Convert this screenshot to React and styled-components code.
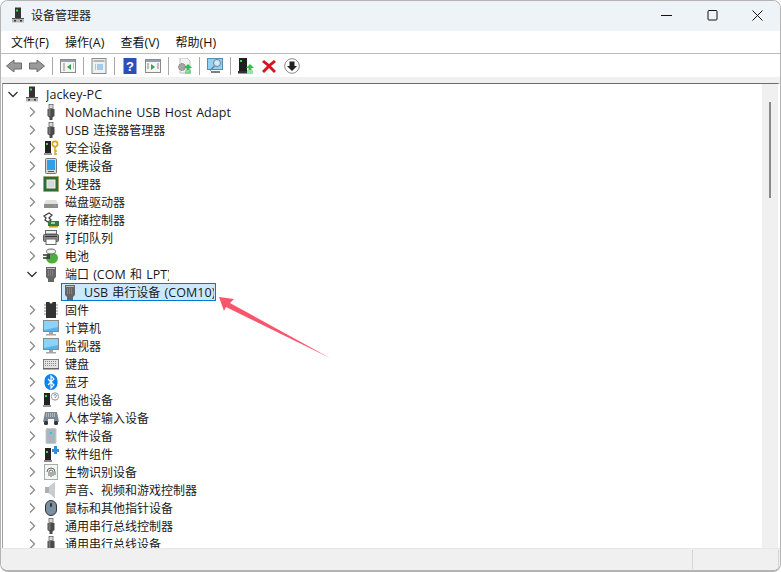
import React from "react";
import styled, { createGlobalStyle } from "styled-components";

const Tower = ({ led = "#35e04a", fill = "#333" }) => (
  <>
    <rect x="5" y="0.500" width="6" height="10.500" fill={fill} />
    <rect x="6" y="2.500" width="2" height="2" fill={led} />
    <path d="M2 12h12v3.500H2z" fill="#b8b8b8" />
    <rect x="2" y="11" width="12" height="1" fill="#555" />
    <rect x="4" y="13" width="2" height="1.500" fill="#333" />
    <rect x="10" y="13" width="2" height="1.500" fill="#333" />
  </>
);

const icons = {
  pc: <Tower />,
  usb: (
    <>
      <rect x="6" y="0.500" width="4" height="4" fill="#d9d9d9" stroke="#666" strokeWidth=".8" />
      <path d="M4.500 5h7v7l-2 1.500V16h-3v-2.500l-2-1.500z" fill="#4a4a4a" />
      <rect x="5.500" y="5" width="2" height="7" fill="#777" />
    </>
  ),
  security: (
    <>
      <rect x="2" y="1" width="6" height="12" fill="#222" />
      <rect x="3" y="3" width="2" height="2" fill="#35e04a" />
      <rect x="1" y="13" width="8" height="2" fill="#999" />
      <circle cx="12" cy="4" r="2.600" fill="none" stroke="#d9a520" strokeWidth="1.600" />
      <path d="M12 7v8M12 11h2M12 14h2" stroke="#d9a520" strokeWidth="1.400" />
    </>
  ),
  portable: (
    <>
      <rect x="2.500" y="0.500" width="11" height="15" rx="1" fill="#d5d5d5" stroke="#777" />
      <rect x="4" y="2" width="8" height="10" fill="#2f9fe8" />
      <rect x="5" y="13" width="6" height="1" fill="#555" />
    </>
  ),
  cpu: (
    <>
      <rect x="0.500" y="0.500" width="15" height="15" fill="#2f6b3a" stroke="#b59a3a" strokeDasharray="1 1" />
      <rect x="2" y="2" width="12" height="12" fill="#2f6b3a" />
      <rect x="4" y="4" width="8" height="8" fill="#d8d8d8" stroke="#eee" />
    </>
  ),
  disk: (
    <>
      <path d="M3 6h10l2 3.500V14H1V9.500z" fill="#e0e0e0" />
      <path d="M1 10h14v4H1z" fill="#8c8c8c" />
      <rect x="11" y="11" width="2" height="1" fill="#35e04a" />
    </>
  ),
  storage: (
    <>
      <path d="M1 4l5-3 3 2-3 3 2 2-3 2-3-2 1-2z" fill="none" stroke="#444" strokeWidth="1.300" />
      <rect x="5" y="9" width="11" height="5" fill="#2f7d46" />
      <rect x="6" y="14" width="9" height="1.500" fill="#c9a227" />
      <rect x="8" y="10" width="4" height="2" fill="#9ad3a5" />
    </>
  ),
  printer: (
    <>
      <rect x="2.500" y="0.500" width="11" height="3.500" fill="#eee" stroke="#666" />
      <rect x="0.500" y="4.500" width="15" height="7" rx="1" fill="#8b8b8b" stroke="#555" />
      <rect x="3" y="9" width="10" height="5.500" fill="#fff" stroke="#666" />
      <rect x="2" y="6" width="12" height="1" fill="#333" />
    </>
  ),
  battery: (
    <>
      <ellipse cx="9" cy="10" rx="6" ry="5.500" fill="#4fae3b" />
      <ellipse cx="8" cy="3.500" rx="4.500" ry="2.500" fill="#e8f4e4" stroke="#666" />
      <path d="M0 7h5M0 10h5" stroke="#333" strokeWidth="1.400" />
      <rect x="4" y="6" width="3" height="5" fill="#444" />
    </>
  ),
  port: (
    <>
      <path d="M3 1h10v10l-2 2v3H5v-3l-2-2z" fill="#666" />
      <rect x="4" y="2" width="8" height="1" fill="#bdbdbd" />
      <path d="M5 5h6M5 7h6M5 9h6" stroke="#9c9c9c" strokeDasharray="1 1" />
    </>
  ),
  firmware: (
    <>
      <path d="M3 0h3.500a1.500 1.500 0 0 0 3 0H13v16H3z" fill="#333" />
      <path d="M1 3h2M1 6h2M1 9h2M1 12h2M13 3h2M13 6h2M13 9h2M13 12h2" stroke="#888" />
    </>
  ),
  monitor: (
    <>
      <rect x="0.500" y="0.500" width="15" height="11" fill="#55b4ec" stroke="#8a8a8a" />
      <path d="M1 1h14v6L1 10z" fill="#8fd2f7" />
      <path d="M6 12h4v2H6zM3 14h10v1.500H3z" fill="#a5a5a5" />
    </>
  ),
  keyboard: (
    <>
      <rect x="0.500" y="3.500" width="15" height="9" fill="#e3e3e3" stroke="#808080" />
      <path d="M2 5.500h12M2 7.500h12M2 9.500h12" stroke="#8a8a8a" strokeDasharray="1 1" />
      <rect x="0" y="12" width="16" height="1.500" fill="#666" />
    </>
  ),
  bluetooth: (
    <>
      <rect x="1.500" y="0" width="13" height="16" rx="6.500" fill="#0a82f0" />
      <path d="M5 5l6 6-3 3V2l3 3-6 6" fill="none" stroke="#fff" strokeWidth="1.200" />
    </>
  ),
  other: (
    <>
      <rect x="1" y="1" width="6" height="12" fill="#222" />
      <rect x="2" y="3" width="2" height="2" fill="#35e04a" />
      <rect x="0" y="13" width="8" height="2" fill="#999" />
      <circle cx="12" cy="4.500" r="3.700" fill="#fff" stroke="#999" />
      <path d="M10.800 3.500a1.300 1.300 0 1 1 1.700 1.500l-.4.800M12 7v.4" fill="none" stroke="#3b6bb5" strokeWidth=".9" />
    </>
  ),
  hid: (
    <>
      <path d="M2 2h12l2 10h-5V9H5v3H0z" fill="#7c8794" />
      <path d="M3 4h10M3 6h10" stroke="#e8e8e8" strokeDasharray="1 1" />
      <rect x="1" y="11" width="4" height="4" rx="1.500" fill="#333" />
      <rect x="11" y="11" width="4" height="4" rx="1.500" fill="#333" />
    </>
  ),
  softdev: (
    <>
      <rect x="3" y="0.500" width="10" height="15" rx="1" fill="#a9b4bd" stroke="#c4cbd1" />
      <rect x="7" y="4" width="2" height="2" fill="#25c9e0" />
    </>
  ),
  softcomp: (
    <>
      <rect x="2" y="2" width="6" height="12" fill="#222" />
      <rect x="3" y="5" width="2" height="2" fill="#35e04a" />
      <rect x="1" y="14" width="8" height="2" fill="#888" />
      <path d="M11 0h3v3h2v3h-2v2h-3V6H9V3h2z" fill="#2f8fe0" />
    </>
  ),
  bio: (
    <>
      <rect x="1.500" y="0.500" width="13" height="15" fill="#f3f6f3" stroke="#a3b0a8" />
      <path d="M4 8a4 4 0 0 1 8 0v3M6 12V8a2 2 0 0 1 4 0v4M8 8v5" fill="none" stroke="#666" />
    </>
  ),
  sound: (
    <>
      <path d="M2 5h4l6-5v16l-6-5H2z" fill="#a9b0b5" />
      <path d="M6 5l6-5v16l-6-5z" fill="#c8cdd0" />
    </>
  ),
  mouse: (
    <>
      <rect x="2.500" y="0.500" width="11" height="15" rx="5.500" fill="#7b8fa3" stroke="#333" />
      <rect x="7" y="3" width="2" height="4" rx="1" fill="#333" />
    </>
  ),
};

const Glyph = ({ name }) => (
  <DeviceSvg viewBox="0 0 16 16">{icons[name]}</DeviceSvg>
);

// latin runs are set a little larger than the CJK ones, as in the Segoe UI original
const Mixed = ({ text }) =>
  text.split(/([\u4e00-\u9fff、 ]+)/).map((part, i) =>
    i % 2 ? part : <Latin key={i}>{part}</Latin>
  );

const ToolIcons = {
  back: (
    <path d="M0.500 8l7.500-6v3h7.500v6H8v3z" fill="#9a9a9a" stroke="#6b6b6b" />
  ),
  forward: (
    <path d="M15.500 8L8 2v3H0.500v6H8v3z" fill="#9a9a9a" stroke="#6b6b6b" />
  ),
  panelLeft: (
    <>
      <rect x="0.500" y="1.500" width="15" height="13" fill="#f5f5f5" stroke="#8a8a8a" />
      <rect x="1" y="2" width="14" height="2" fill="#8ea2b4" />
      <path d="M11 6v6L7 9z" fill="#2ea84a" />
      <path d="M3 6h2M3 8h2M3 10h2M3 12h2M13 6h1M13 8h1M13 10h1" stroke="#8a8a8a" />
    </>
  ),
  sheet: (
    <>
      <rect x="1" y="0.500" width="14" height="15" fill="#eef0f2" stroke="#8a8a8a" />
      <rect x="2.500" y="2" width="11" height="2" fill="#b5b5b5" />
      <path d="M6 7h6M6 9h6M6 11h6M4 7h1M4 9h1M4 11h1" stroke="#5aa6e0" />
    </>
  ),
  help: (
    <>
      <rect x="1.500" y="0" width="13" height="16" fill="#2a4fb5" />
      <text x="8" y="13" fontSize="13" fontWeight="700" fill="#fff" textAnchor="middle" fontFamily="Liberation Sans">?</text>
    </>
  ),
  panelRight: (
    <>
      <rect x="0.500" y="1.500" width="15" height="13" fill="#f5f5f5" stroke="#8a8a8a" />
      <rect x="1" y="2" width="14" height="2" fill="#8ea2b4" />
      <path d="M6 6v6l4-3z" fill="#2ea84a" />
      <path d="M2 6h2M2 8h2M2 10h2M12 6h2M12 8h2M12 10h2" stroke="#8a8a8a" />
    </>
  ),
  update: (
    <>
      <path d="M4 0h7l3 3v12H4z" fill="#f2f2f2" stroke="#c0c0c0" />
      <circle cx="6" cy="9" r="3.500" fill="#a5a5a5" stroke="#777" strokeDasharray="1.500 1" />
      <path d="M12 6l4 4h-2.500v2h-3v-2H8z" fill="#2cc24a" />
      <path d="M9 13h6M9 15h6" stroke="#2cc24a" />
    </>
  ),
  scan: (
    <>
      <rect x="0.500" y="0.500" width="15" height="11" fill="#8fd2f7" stroke="#5a8ab0" />
      <path d="M4 14h9" stroke="#555" strokeWidth="1.500" />
      <circle cx="10" cy="5" r="3.500" fill="#cfeaf9" stroke="#6b7f8c" />
      <path d="M7.500 8L3 12.500" stroke="#6b7f8c" strokeWidth="1.500" />
    </>
  ),
  enable: (
    <>
      <rect x="1" y="0" width="8" height="13" fill="#1f1f1f" />
      <rect x="2" y="2" width="2" height="2" fill="#35e04a" />
      <rect x="0" y="13" width="9" height="2.500" fill="#333" />
      <path d="M12 6l4 4h-2.500v2h-3v-2H8z" fill="#2cc24a" />
      <path d="M9 13h6M9 15h6" stroke="#2cc24a" />
    </>
  ),
  remove: (
    <path d="M3 2l5 4 5-4 2 2-5 4 5 5-2 2-5-5-5 5-2-2 5-5-5-4z" fill="#d8121e" />
  ),
  disable: (
    <>
      <circle cx="8" cy="8" r="7.300" fill="#fff" stroke="#8a8a8a" />
      <path d="M5.500 3.500h5V8H13l-5 5-5-5h2.500z" fill="#222" />
    </>
  ),
};

const toolbar = [
  "back", "forward", null, "panelLeft", null, "sheet", null, "help", "panelRight", null,
  "update", null, "scan", null, "enable", "remove", "disable",
];

const menus = ["文件(F)", "操作(A)", "查看(V)", "帮助(H)"];

const rows = [
  { level: 0, icon: "pc", label: "Jackey-PC", open: true },
  { level: 1, icon: "usb", label: "NoMachine USB Host Adapt" },
  { level: 1, icon: "usb", label: "USB 连接器管理器" },
  { level: 1, icon: "security", label: "安全设备" },
  { level: 1, icon: "portable", label: "便携设备" },
  { level: 1, icon: "cpu", label: "处理器" },
  { level: 1, icon: "disk", label: "磁盘驱动器" },
  { level: 1, icon: "storage", label: "存储控制器" },
  { level: 1, icon: "printer", label: "打印队列" },
  { level: 1, icon: "battery", label: "电池" },
  { level: 1, icon: "port", label: "端口 (COM 和 LPT)", open: true, clip: 104 },
  { level: 2, icon: "port", label: "USB 串行设备 (COM10)", leaf: true, selected: true, clip: 130 },
  { level: 1, icon: "firmware", label: "固件" },
  { level: 1, icon: "monitor", label: "计算机" },
  { level: 1, icon: "monitor", label: "监视器" },
  { level: 1, icon: "keyboard", label: "键盘" },
  { level: 1, icon: "bluetooth", label: "蓝牙" },
  { level: 1, icon: "other", label: "其他设备" },
  { level: 1, icon: "hid", label: "人体学输入设备" },
  { level: 1, icon: "softdev", label: "软件设备" },
  { level: 1, icon: "softcomp", label: "软件组件" },
  { level: 1, icon: "bio", label: "生物识别设备" },
  { level: 1, icon: "sound", label: "声音、视频和游戏控制器" },
  { level: 1, icon: "mouse", label: "鼠标和其他指针设备" },
  { level: 1, icon: "usb", label: "通用串行总线控制器" },
  { level: 1, icon: "usb", label: "通用串行总线设备" },
];

const App = () => {
  return (
    <Window>
      <GlobalStyle />
      <TitleBar>
        <TitleLeft>
          <Glyph name="pc" />
          <TitleText>设备管理器</TitleText>
        </TitleLeft>
        <Controls>
          <ControlSvg viewBox="0 0 11 11">
            <path d="M0 5.500h11" stroke="#111" />
          </ControlSvg>
          <ControlSvg viewBox="0 0 11 11">
            <rect x="1" y="0.500" width="9" height="9.500" rx="1" fill="none" stroke="#111" />
          </ControlSvg>
          <ControlSvg viewBox="0 0 11 11">
            <path d="M0.500 0.500l10 10M10.500 0.500l-10 10" stroke="#111" />
          </ControlSvg>
        </Controls>
      </TitleBar>
      <MenuBar>
        {menus.map((m) => (
          <MenuItem key={m}>
            <Mixed text={m} />
          </MenuItem>
        ))}
      </MenuBar>
      <ToolBar>
        {toolbar.map((t, i) =>
          t ? (
            <ToolButton key={i}>
              <DeviceSvg viewBox="0 0 16 16">{ToolIcons[t]}</DeviceSvg>
            </ToolButton>
          ) : (
            <ToolSep key={i} />
          )
        )}
      </ToolBar>
      <Band />
      <Body>
        <Tree>
          {rows.map((r) => (
            <Row key={r.label} $level={r.level}>
              <Expander>
                {!r.leaf && (
                  <svg width="12" height="12" viewBox="0 0 12 12">
                    <path
                      d={r.open ? "M1.500 4L6 8.500 10.500 4" : "M4 1.500L8.500 6 4 10.500"}
                      fill="none"
                      stroke={r.open ? "#333" : "#8a8a8a"}
                      strokeWidth="1.300"
                    />
                  </svg>
                )}
              </Expander>
              <RowContent $selected={r.selected}>
                <Glyph name={r.icon} />
                <Label $clip={r.clip}>
                  <Mixed text={r.label} />
                </Label>
              </RowContent>
            </Row>
          ))}
        </Tree>
        <ScrollTrack>
          <ScrollThumb />
        </ScrollTrack>
      </Body>
      <StatusBar>
        <StatusCell $grow />
        <StatusCell $width={85} />
      </StatusBar>
      <Arrow viewBox="0 0 781 572">
        <polygon
          points="219,297 234,299 230,303 330,358 226,307 224,311"
          fill="#f9566e"
        />
      </Arrow>
    </Window>
  );
};

//styled components
const GlobalStyle = createGlobalStyle`
  html, body {
    margin: 0;
    padding: 0;
    background: #fff;
    overflow: hidden;
  }
  body {
    font-family: "Open Sans", "Noto Sans CJK SC", sans-serif;
    font-size: 12px;
    color: #1a1a1a;
  }
`;

const Window = styled.div`
  position: relative;
  box-sizing: border-box;
  width: 781px;
  height: 572px;
  display: flex;
  flex-direction: column;
  border: 1px solid #b4b4b4;
  border-bottom-width: 2px;
  border-radius: 8px;
  overflow: hidden;
  background: #fff;
`;
const TitleBar = styled.div`
  box-sizing: border-box;
  height: 30px;
  flex: none;
  display: flex;
  align-items: center;
  justify-content: space-between;
  padding: 0 0 2px 9px;
  background: #eef3f8;
`;
const TitleLeft = styled.div`
  display: flex;
  align-items: center;
  gap: 5px;
`;
const TitleText = styled.span`
  font-size: 12px;
  color: #222;
`;
const Controls = styled.div`
  display: flex;
  align-items: center;
  gap: 34.5px;
  padding-right: 17px;
`;
const ControlSvg = styled.svg`
  width: 11px;
  height: 11px;
  display: block;
`;
const MenuBar = styled.div`
  height: 22px;
  flex: none;
  display: flex;
  align-items: center;
  gap: 16px;
  padding-left: 10px;
  background: #fff;
  border-bottom: 1px solid #b9bcc2;
`;
const MenuItem = styled.span`
  font-size: 12px;
  color: #111;
`;
const Latin = styled.span`
  font-size: 12.5px;
  letter-spacing: 0.06px;
`;
const ToolBar = styled.div`
  height: 23px;
  flex: none;
  display: flex;
  align-items: center;
  padding-left: 1.5px;
  background: #fff;
`;
const ToolButton = styled.div`
  width: 23px;
  height: 22px;
  display: flex;
  align-items: center;
  justify-content: center;
`;
const ToolSep = styled.div`
  box-sizing: border-box;
  width: 8px;
  height: 18px;
  padding-left: 3px;
  &::before {
    content: "";
    display: block;
    width: 1px;
    height: 100%;
    background: #a8a8a8;
  }
`;
const Band = styled.div`
  height: 6px;
  flex: none;
  background: #f0f0f0;
`;
const Body = styled.div`
  flex: 1;
  min-height: 0;
  display: flex;
  margin: 0 0 0 1px;
  border-top: 1px solid #6d6d6d;
  border-left: 1px solid #a0a0a0;
  border-right: 2px solid #fff;
  background: #fff;
`;
const Tree = styled.div`
  flex: 1;
  min-width: 0;
  overflow: hidden;
  padding-top: 1px;
`;
const Row = styled.div`
  height: 18px;
  display: flex;
  align-items: center;
  padding-left: ${(p) => 3 + p.$level * 19}px;
`;
const Expander = styled.span`
  width: 14px;
  flex: none;
  display: flex;
  align-items: center;
  justify-content: center;
`;
const RowContent = styled.span`
  box-sizing: border-box;
  height: 18px;
  display: inline-flex;
  align-items: center;
  gap: 6px;
  margin-left: 3px;
  padding-right: 1px;
  border: 1px solid ${(p) => (p.$selected ? "#0078d7" : "transparent")};
  background: ${(p) => (p.$selected ? "#cce8ff" : "transparent")};
`;
const DeviceSvg = styled.svg`
  width: 16px;
  height: 16px;
  flex: none;
  display: block;
`;
const Label = styled.span`
  white-space: nowrap;
  overflow: hidden;
  line-height: 16px;
  margin-top: 2px;
  word-spacing: 1px;
  max-width: ${(p) => (p.$clip ? `${p.$clip}px` : "none")};
`;
const ScrollTrack = styled.div`
  width: 16px;
  flex: none;
  background: #f0f0f0;
  padding-top: 18px;
  display: flex;
  justify-content: center;
`;
const ScrollThumb = styled.div`
  width: 2px;
  height: 96px;
  background: #8a8a8a;
`;
const StatusBar = styled.div`
  box-sizing: border-box;
  height: 22px;
  flex: none;
  display: flex;
  border-top: 1px solid #e6e6e6;
  padding: 1px 1px 1px 2px;
  background: #f0f0f0;
`;
const StatusCell = styled.div`
  flex: ${(p) => (p.$grow ? "1" : "none")};
  width: ${(p) => (p.$width ? `${p.$width}px` : "auto")};
  border-right: 1px solid #d4d4d4;
`;
const Arrow = styled.svg`
  position: absolute;
  left: -1px;
  top: -1px;
  width: 781px;
  height: 572px;
  pointer-events: none;
`;

export default App;
